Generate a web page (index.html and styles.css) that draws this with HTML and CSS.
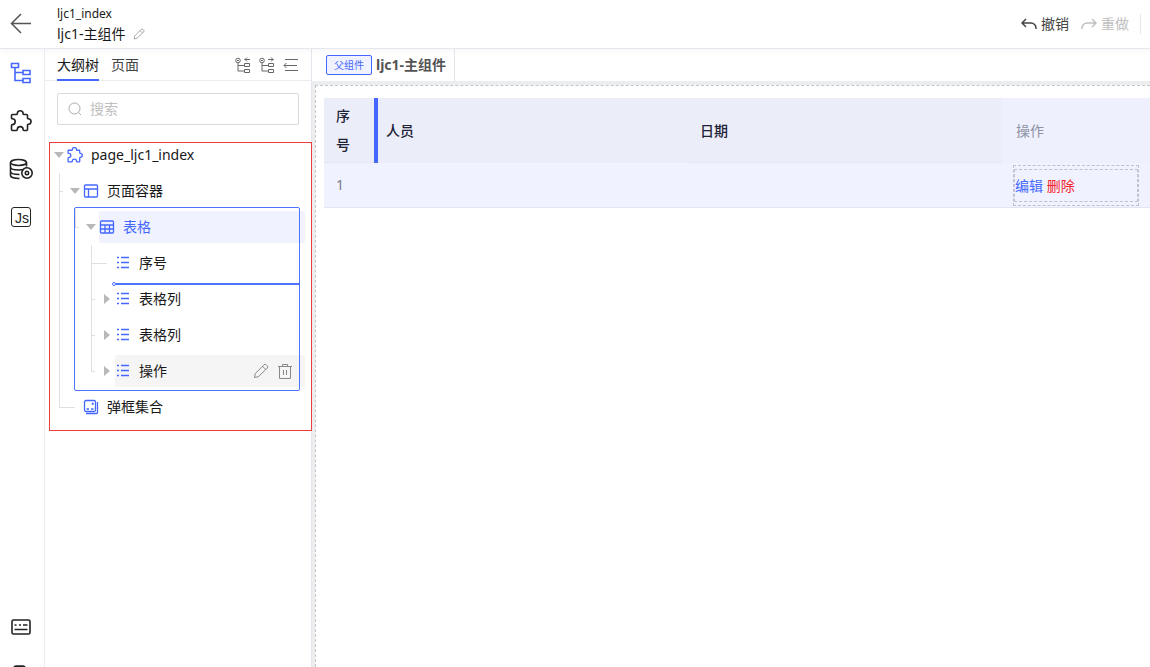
FILE: index.html
```html
<!DOCTYPE html>
<html lang="zh-CN">
<head>
    <meta charset="UTF-8">
    <meta name="viewport" content="width=device-width, initial-scale=1.0">
    <title>ljc1-主组件</title>
    <link rel="stylesheet" href="styles.css">
</head>
<body>
    <svg class="sprite" aria-hidden="true">
        <symbol id="i-puzzle" viewBox="0 0 22 22">
            <path d="M1.500 5.500Q1.500 4.500 2.500 4.500H6.500Q7.300 4.500 7.300 3.700A2.900 2.900 0 0 1 13.100 3.700Q13.100 4.500 14 4.500H16.500Q17.500 4.500 17.500 5.500V8Q17.500 8.800 18.300 8.800A2.700 2.700 0 0 1 18.300 14.200Q17.500 14.200 17.500 15V19.500Q17.500 20.500 16.500 20.500H14Q13.100 20.500 13.100 19.500A2.900 2.900 0 0 0 7.300 19.500Q7.300 20.500 6.500 20.500H2.500Q1.500 20.500 1.500 19.500V15.400Q1.500 14.600 2.300 14.600A2.900 2.900 0 0 0 2.300 8.800Q1.500 8.800 1.500 8z"/>
        </symbol>
        <symbol id="i-list" viewBox="0 0 16 16">
            <path d="M2 2.500h2M2 7.500h2M2 12.500h2M6 2.500h8M6 7.500h8M6 12.500h8"/>
        </symbol>
        <symbol id="i-pencil" viewBox="0 0 16 16">
            <path d="M1.500 14.500l.8-4L11 1.800a1.500 1.500 0 0 1 2.200 0l1 1a1.500 1.500 0 0 1 0 2.200L5.500 13.700zM9.500 3.300l3.200 3.200"/>
        </symbol>
        <symbol id="i-nodes" viewBox="0 0 16 16">
            <circle cx="3" cy="3.500" r="2.300"/>
            <path d="M2 3.500h2M3 6v8h6M3 8.500h6M9.500 6.500h5v3h-5zM9.500 12.500h5v3h-5z"/>
        </symbol>
    </svg>

    <header class="header">
        <button class="icon-btn back" aria-label="返回">
            <svg width="22" height="22" viewBox="0 0 22 22"><path d="M21 10.500H2M11 1L1.500 10.500 11 20"/></svg>
        </button>
        <div class="titles">
            <div class="page-code">ljc1_index</div>
            <div class="page-name">ljc1-主组件
                <button class="icon-btn" aria-label="重命名"><svg width="12" height="12"><use href="#i-pencil"/></svg></button>
            </div>
        </div>
        <div class="actions">
            <button class="action">
                <svg width="16" height="16" viewBox="0 0 16 16"><path d="M5 3L1 7l4 4M1 7h9a5 5 0 0 1 5 5v1"/></svg>撤销
            </button>
            <button class="action" disabled>
                <svg width="16" height="16" viewBox="0 0 16 16"><path d="M11 3l4 4-4 4M15 7H6a5 5 0 0 0-5 5v1"/></svg>重做
            </button>
        </div>
    </header>

    <div class="main">
        <nav class="rail">
            <button class="icon-btn active" aria-label="大纲树">
                <svg width="22" height="22" viewBox="0 0 22 22"><path d="M1.500 1.500h7v4h-7zM5 5.500V18.500h8M5 10.500h8M13 8.500h7v4h-7zM13 16.500h7v4h-7z"/></svg>
            </button>
            <button class="icon-btn" aria-label="组件">
                <svg width="22" height="22"><use href="#i-puzzle"/></svg>
            </button>
            <button class="icon-btn" aria-label="数据源">
                <svg width="24" height="22" viewBox="0 0 24 22">
                    <ellipse cx="9.500" cy="4.500" rx="8" ry="3"/>
                    <path d="M1.500 4.500v13c0 2 5 3 9 3M17.500 4.500v4M1.500 9c0 2 4 3 8 3s8-1 8-3M1.500 13.500c0 2 4 3 9 3"/>
                    <circle cx="18" cy="15" r="5.200" fill="#fff"/>
                    <circle cx="18" cy="15" r="1.700"/>
                </svg>
            </button>
            <button class="icon-btn js" aria-label="脚本"><span>Js</span></button>
            <button class="icon-btn bottom" aria-label="快捷键">
                <svg width="22" height="22" viewBox="0 0 22 22"><rect x="2" y="4" width="18" height="14" rx="1.500"/><path d="M4.500 9h2M9 9h2M13 9h4.500M4.500 13.500h13"/></svg>
            </button>
            <button class="icon-btn" aria-label="帮助">
                <svg width="22" height="22" viewBox="0 0 22 22"><rect x="4" y="2" width="11" height="18" rx="2"/></svg>
            </button>
        </nav>

        <aside class="panel">
            <div class="panel-tabs">
                <button class="tab active">大纲树</button>
                <button class="tab">页面</button>
                <div class="tools">
                    <button class="icon-btn" aria-label="全部收起"><svg width="16" height="16" viewBox="0 0 16 16"><use href="#i-nodes"/><path d="M15 2.500H9.500M12 .5l-2 2 2 2"/></svg></button>
                    <button class="icon-btn" aria-label="全部展开"><svg width="16" height="16" viewBox="0 0 16 16"><use href="#i-nodes"/><path d="M9 2.500h5.500M12 .5l2 2-2 2"/></svg></button>
                    <button class="icon-btn" aria-label="收起面板"><svg width="16" height="16" viewBox="0 0 16 16"><path d="M2 2.500h13M2 13.500h13M1 8.500h13M3.500 6L1 8.500 3.500 11"/></svg></button>
                </div>
            </div>
            <label class="search">
                <svg width="14" height="14" viewBox="0 0 14 14"><circle cx="6.500" cy="6.500" r="5.500"/><path d="M10.500 10.500l2.500 2.500"/></svg>
                <input type="text" placeholder="搜索" aria-label="搜索">
            </label>

            <div class="tree">
                <div class="node">
                    <i class="arrow open"></i>
                    <div class="label"><svg width="16" height="16" viewBox="0 0 22 22" class="thick"><use href="#i-puzzle" width="22" height="22"/></svg><span>page_ljc1_index</span></div>
                </div>
                <ul>
                    <li>
                        <div class="node">
                            <i class="arrow open"></i>
                            <div class="label"><svg width="16" height="16" viewBox="0 0 16 16"><rect x="1.500" y="2" width="13" height="12" rx="1"/><path d="M1.500 6h13M5.500 6v8"/></svg><span>页面容器</span></div>
                        </div>
                        <ul>
                            <li>
                                <div class="node selected">
                                    <i class="arrow open"></i>
                                    <div class="label"><svg width="16" height="16" viewBox="0 0 16 16"><rect x="1.500" y="2" width="13" height="12" rx="1"/><path d="M1.500 6h13M1.500 10h13M6 6v8M10.500 6v8"/></svg><span>表格</span></div>
                                </div>
                                <ul>
                                    <li class="leaf">
                                        <div class="node"><i class="arrow"></i><div class="label"><svg width="16" height="16"><use href="#i-list"/></svg><span>序号</span></div></div>
                                    </li>
                                    <li>
                                        <div class="node"><i class="arrow closed"></i><div class="label"><svg width="16" height="16"><use href="#i-list"/></svg><span>表格列</span></div></div>
                                    </li>
                                    <li>
                                        <div class="node"><i class="arrow closed"></i><div class="label"><svg width="16" height="16"><use href="#i-list"/></svg><span>表格列</span></div></div>
                                    </li>
                                    <li>
                                        <div class="node hover">
                                            <i class="arrow closed"></i>
                                            <div class="label"><svg width="16" height="16"><use href="#i-list"/></svg><span>操作</span>
                                                <div class="node-tools">
                                                    <button class="icon-btn" aria-label="编辑节点"><svg width="16" height="16"><use href="#i-pencil"/></svg></button>
                                                    <button class="icon-btn" aria-label="删除节点"><svg width="16" height="16" viewBox="0 0 16 16"><path d="M1 3.500h14M5.500 3.500v-2h5v2M2.500 3.500v12h11v-12M6.500 7v5M9.500 7v5"/></svg></button>
                                                </div>
                                            </div>
                                        </div>
                                    </li>
                                </ul>
                            </li>
                        </ul>
                    </li>
                    <li class="leaf">
                        <div class="node"><i class="arrow"></i><div class="label"><svg width="16" height="16" viewBox="0 0 16 16"><rect x="1.500" y="1.500" width="11" height="11" rx="1.500"/><path d="M14.500 3v10.500a1 1 0 0 1-1 1H3M3.500 10h2.500M8 10h2.500M9 4l1.500 1.500M10.500 4L9 5.500"/></svg><span>弹框集合</span></div></div>
                    </li>
                </ul>
                <div class="drop-box"></div>
                <div class="drop-line"></div>
                <div class="mark-box"></div>
            </div>
        </aside>

        <section class="workspace">
            <div class="crumbs">
                <div class="crumb"><button class="parent-btn">父组件</button><strong>ljc1-主组件</strong></div>
            </div>
            <div class="canvas">
                <table class="grid">
                    <thead>
                        <tr>
                            <th class="col-index">序号</th>
                            <th class="col-drop">人员</th>
                            <th>日期</th>
                            <th class="col-ops">操作</th>
                        </tr>
                    </thead>
                    <tbody>
                        <tr>
                            <td>1</td>
                            <td></td>
                            <td></td>
                            <td class="ops-cell">
                                <div class="slot"><div class="slot-inner"><a href="#">编辑</a> <a href="#" class="danger">删除</a></div></div>
                            </td>
                        </tr>
                    </tbody>
                </table>
            </div>
        </section>
    </div>
</body>
</html>
```
FILE: styles.css
```css
* {
    box-sizing: border-box;
}
body {
    margin: 0;
    height: 100vh;
    display: flex;
    flex-direction: column;
    overflow: hidden;
    font-family: "Noto Sans", "Noto Sans CJK SC", sans-serif;
    font-size: 14px;
    line-height: 20px;
    color: #191919;
    background-color: #fff;
}
button {
    border: none;
    padding: 0;
    background: none;
    font: inherit;
    color: inherit;
    cursor: pointer;
}
svg {
    display: block;
    flex: none;
    fill: none;
    stroke: currentColor;
}
.sprite {
    position: absolute;
    width: 0;
    height: 0;
}
.icon-btn {
    display: flex;
    align-items: center;
    justify-content: center;
}

/* Header */
.header {
    display: flex;
    align-items: center;
    height: 49px;
    flex: none;
    padding-bottom: 1px;
    border-bottom: 1px solid #e6e7ee;
    box-shadow: 0 2px 6px rgba(0, 0, 0, 0.04);
    z-index: 1;
}
.back {
    width: 42px;
    margin-right: 15px;
    color: #555;
}
.back svg {
    stroke-width: 1.5;
}
.page-code {
    font-size: 12px;
}
.page-name {
    display: flex;
    align-items: center;
    gap: 8px;
}
.page-name .icon-btn {
    color: #888;
}
.actions {
    display: flex;
    align-items: center;
    gap: 12px;
    height: 20px;
    margin: 0 9px 0 auto;
    padding-right: 11px;
    border-right: 1px solid #e6e6e6;
}
.action {
    display: flex;
    align-items: center;
    gap: 4px;
    color: #444;
}
.action:disabled {
    color: #c0c0c0;
}
.action svg {
    stroke-width: 1.5;
}

/* Left rail */
.main {
    display: flex;
    flex: 1;
    min-height: 0;
}
.rail {
    display: flex;
    flex-direction: column;
    align-items: center;
    flex: none;
    width: 45px;
    padding-right: 2px;
    border-right: 1px solid #ececee;
    color: #222;
}
.rail .icon-btn {
    width: 42px;
    height: 48px;
    flex: none;
}
.rail svg {
    stroke-width: 1.6;
}
.rail .active {
    color: #4468ff;
}
.rail .bottom {
    margin-top: auto;
}
.rail .icon-btn:last-child {
    margin-bottom: -32px;
}
.rail .icon-btn:last-child svg {
    fill: currentColor;
}
.js span {
    width: 20px;
    height: 20px;
    padding-left: 2px;
    border: 1px solid #222;
    border-radius: 3px;
    font: 14px/20px "Liberation Sans", sans-serif;
}

/* Outline panel */
.panel {
    width: 267px;
    flex: none;
    border-right: 1px solid #e6e7ee;
}
.panel-tabs {
    display: flex;
    gap: 12px;
    height: 32px;
    padding: 0 12px;
    border-bottom: 1px solid #ececee;
}
.tab {
    height: 32px;
    padding-top: 1px;
    color: #444;
    border-bottom: 2px solid transparent;
}
.tab.active {
    color: #191919;
    border-color: #4468ff;
}
.tools {
    display: flex;
    align-items: center;
    gap: 8px;
    margin-left: auto;
    color: #666;
}
.search {
    display: flex;
    align-items: center;
    gap: 8px;
    height: 32px;
    margin: 12px;
    padding: 0 10px;
    border: 1px solid #d9d9d9;
    border-radius: 2px;
    color: #aaa;
}
.search input {
    flex: 1;
    min-width: 0;
    padding: 0;
    border: none;
    outline: none;
    background: none;
    font: inherit;
}
.search input::placeholder {
    color: #bfbfbf;
}

/* Tree */
.tree {
    position: relative;
    margin: 0 6px;
}
.tree ul {
    margin: 0;
    padding-left: 16px;
    list-style: none;
}
.tree li {
    position: relative;
}
.tree li::before,
.tree li::after {
    content: "";
    position: absolute;
    left: -8px;
    top: 0;
}
.tree li::before {
    height: 100%;
    border-left: 1px solid #e0e0e0;
}
.tree li:last-child::before {
    height: 18px;
}
.tree li::after {
    top: 18px;
    width: 4px;
    border-top: 1px solid #e0e0e0;
}
.tree li.leaf::after {
    width: 16px;
}
.node {
    display: flex;
    align-items: center;
    height: 36px;
}
.arrow {
    display: flex;
    justify-content: center;
    width: 16px;
    flex: none;
}
.arrow.open::before {
    content: "";
    border: 5px solid transparent;
    border-top: 6px solid #b8b8b8;
    border-bottom: none;
}
.arrow.closed::before {
    content: "";
    border: 5px solid transparent;
    border-left: 6px solid #b8b8b8;
    border-right: none;
}
.label {
    display: flex;
    align-items: center;
    gap: 8px;
    flex: 1;
    height: 32px;
    padding-right: 12px;
    border-radius: 2px;
}
.label > svg {
    color: #4468ff;
    stroke-width: 1.3;
}
.label > .thick {
    stroke-width: 1.8;
}
.selected .label {
    background-color: #f0f2ff;
    color: #4468ff;
}
.hover .label {
    background-color: #f5f5f5;
}
.node-tools {
    display: flex;
    gap: 8px;
    margin-left: auto;
    color: #888;
}

/* Drag target and highlight frames over the tree */
.drop-box {
    position: absolute;
    top: 70px;
    bottom: 34px;
    left: 23px;
    right: 5px;
    border: 1px solid #4d74ff;
    border-radius: 2px;
}
.drop-line {
    position: absolute;
    top: 146px;
    left: 64px;
    right: 6px;
    height: 2px;
    background-color: #4d74ff;
}
.drop-line::before {
    content: "";
    position: absolute;
    left: -3px;
    top: -1px;
    width: 4px;
    height: 4px;
    border: 1px solid #4d74ff;
    border-radius: 50%;
    background-color: #fff;
    box-sizing: border-box;
}
.mark-box {
    position: absolute;
    top: 5px;
    bottom: -6px;
    left: -2px;
    right: -7px;
    border: 1px solid #f03c3c;
}

/* Workspace */
.workspace {
    display: flex;
    flex-direction: column;
    flex: 1;
    min-width: 0;
    padding: 0 0 0 3px;
    background: linear-gradient(#fff 32px, #ebedef 32px);
}
.crumbs {
    display: flex;
    height: 32px;
    flex: none;
}
.crumb {
    display: flex;
    align-items: center;
    gap: 4px;
    padding: 0 8px 0 11px;
    border-right: 1px solid #e6e7ee;
    color: #555;
}
.parent-btn {
    height: 20px;
    padding: 0 7px;
    border: 1px solid #4468ff;
    border-radius: 2px;
    background-color: #f0f2ff;
    color: #4468ff;
    font-size: 10px;
    line-height: 18px;
}
.canvas {
    flex: 1;
    margin-top: 4px;
    padding: 12px 0 0 8px;
    border: 1px dashed #c4c6ca;
    border-right: none;
    border-bottom: none;
    background-color: #fff;
}
.grid {
    width: 100%;
    table-layout: fixed;
    border-collapse: separate;
    border-spacing: 0;
}
.grid th {
    height: 65px;
    padding: 0 12px;
    border-bottom: 1px solid #e6e7f2;
    background-color: #ebedf9;
    color: #1e2236;
    font-weight: 500;
    text-align: left;
    line-height: 29px;
}
.grid td {
    height: 45px;
    padding: 0 12px;
    border-bottom: 1px solid #e3e5f2;
    background-color: #f0f2ff;
    color: #777a88;
}
.grid .col-index {
    width: 50px;
}
.grid .col-drop {
    padding-left: 8px;
    border-left: 4px solid #4468ff;
    border-bottom: none;
}
.grid .col-ops {
    width: 148px;
    padding-left: 14px;
    border-bottom-color: #eef0fd;
    background-color: #eef0fd;
    color: #8f92a3;
    font-weight: normal;
}
.grid .ops-cell {
    padding: 0 11px;
}
.slot {
    padding: 3px 0;
    border: 1px dashed #bfc1cc;
}
.slot-inner {
    padding: 5px 0;
    border: 1px dashed #bfc1cc;
    line-height: 21px;
}
.slot a {
    color: #4468ff;
    text-decoration: none;
}
.slot .danger {
    color: #f5222d;
}
```
